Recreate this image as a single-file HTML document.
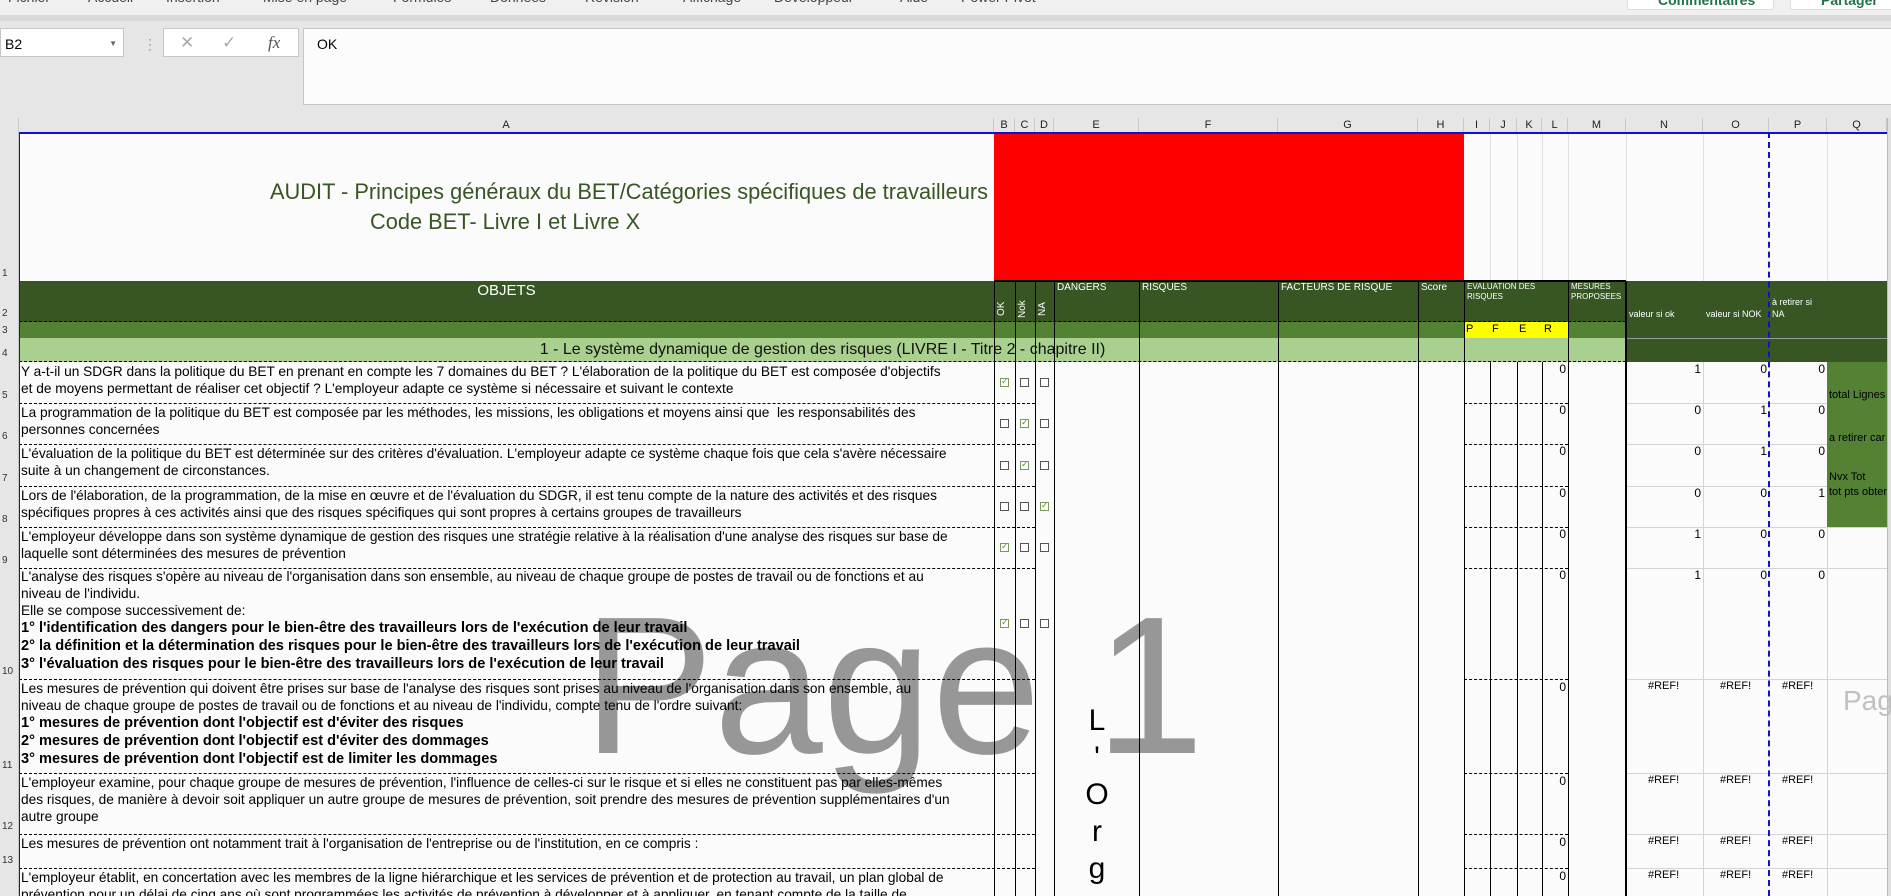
<!DOCTYPE html>
<html><head><meta charset="utf-8"><style>
*{margin:0;padding:0;box-sizing:border-box}
html{width:1891px;height:896px;overflow:hidden}
body{width:1891px;height:896px;overflow:hidden;background:#e6e6e6;font-family:"Liberation Sans",Arial,sans-serif;position:relative}
.a{position:absolute}
.t{position:absolute;white-space:nowrap;font-size:13.7px;line-height:17px;color:#000}
.t b{font-size:14.6px}
.cb{position:absolute;width:9px;height:9px;border:1px solid #555;background:#fff}
.cb.k{border-color:#7a9a5a}
.cb.k::after{content:"✓";position:absolute;left:0;top:-3px;font-size:9px;color:#5a8a3a}
.hd{position:absolute;top:118px;height:14px;font-size:11px;text-align:center;line-height:14px;color:#222;border-right:1px solid #c8c8c8}
.v{position:absolute;width:1px;background:#000}
.hl{position:absolute;height:0;border-top:1px dashed #000}
.gl{position:absolute;height:1px;background:#d4d4d4}
.n{position:absolute;font-size:12px;text-align:right;color:#000}
.rn{position:absolute;left:0;width:18px;font-size:10px;color:#333;text-align:left;padding-left:2px}
.mn{position:absolute;top:-11px;font-size:14px;color:#444}
</style></head><body>
<div class="a" style="left:0;top:0;width:1891px;height:15px;background:#f0f0f0"></div>
<div class="a" style="left:0;top:15px;width:1891px;height:6px;background:#d9d9d9"></div>
<span class="mn" style="left:8px">Fichier</span><span class="mn" style="left:88px">Accueil</span><span class="mn" style="left:166px">Insertion</span><span class="mn" style="left:263px">Mise en page</span><span class="mn" style="left:393px">Formules</span><span class="mn" style="left:490px">Données</span><span class="mn" style="left:585px">Révision</span><span class="mn" style="left:683px">Affichage</span><span class="mn" style="left:774px">Développeur</span><span class="mn" style="left:900px">Aide</span><span class="mn" style="left:961px">Power Pivot</span>
<div class="a" style="left:1627px;top:-6px;width:147px;height:16px;background:#fff;border:1px solid #ddd;border-radius:3px;font-size:14px;font-weight:bold;color:#217346;padding-left:30px;line-height:10px;overflow:hidden">Commentaires</div>
<div class="a" style="left:1790px;top:-6px;width:110px;height:16px;background:#fff;border:1px solid #ddd;border-radius:3px;font-size:14px;font-weight:bold;color:#217346;padding-left:30px;line-height:10px;overflow:hidden">Partager</div>
<div class="a" style="left:0;top:28px;width:124px;height:29px;background:#fff;border:1px solid #c6c6c6;font-size:14px;padding:8px 4px;line-height:14px">B2<span style="position:absolute;right:6px;top:8px;font-size:8px;color:#666">▼</span></div>
<div class="a" style="left:143px;top:36px;font-size:14px;color:#999">⋮</div>
<div class="a" style="left:163px;top:28px;width:136px;height:29px;background:#fff;border:1px solid #c6c6c6;font-size:17px;color:#aaa;line-height:27px"><span style="position:absolute;left:16px">✕</span><span style="position:absolute;left:58px">✓</span><span style="position:absolute;left:104px;font-family:'Liberation Serif',serif;font-style:italic;color:#555">fx</span></div>
<div class="a" style="left:303px;top:28px;width:1588px;height:77px;background:#fcfcfc;border:1px solid #c6c6c6;border-right:none;font-size:14px;padding:8px 13px;line-height:14px">OK</div>
<div class="a" style="left:19px;top:132px;width:1868px;height:764px;background:#fbfbfb"></div>
<div class="a" style="left:1887px;top:118px;width:4px;height:778px;background:#e0e0e0;border-left:1px solid #bbb"></div>
<div class="a" style="left:0;top:118px;width:19px;height:14px;border-right:1px solid #c8c8c8"></div>
<div class="hd" style="left:19px;width:975px">A</div>
<div class="hd" style="left:994px;width:21px">B</div>
<div class="hd" style="left:1015px;width:20px">C</div>
<div class="hd" style="left:1035px;width:19px">D</div>
<div class="hd" style="left:1054px;width:85px">E</div>
<div class="hd" style="left:1139px;width:139px">F</div>
<div class="hd" style="left:1278px;width:140px">G</div>
<div class="hd" style="left:1418px;width:46px">H</div>
<div class="hd" style="left:1464px;width:26px">I</div>
<div class="hd" style="left:1490px;width:27px">J</div>
<div class="hd" style="left:1517px;width:25px">K</div>
<div class="hd" style="left:1542px;width:26px">L</div>
<div class="hd" style="left:1568px;width:58px">M</div>
<div class="hd" style="left:1626px;width:77px">N</div>
<div class="hd" style="left:1703px;width:66px">O</div>
<div class="hd" style="left:1769px;width:58px">P</div>
<div class="hd" style="left:1827px;width:60px">Q</div>
<div class="rn" style="top:268px">1</div><div class="rn" style="top:308px">2</div><div class="rn" style="top:325px">3</div><div class="rn" style="top:348px">4</div><div class="rn" style="top:390px">5</div><div class="rn" style="top:431px">6</div><div class="rn" style="top:473px">7</div><div class="rn" style="top:514px">8</div><div class="rn" style="top:555px">9</div><div class="rn" style="top:666px">10</div><div class="rn" style="top:760px">11</div><div class="rn" style="top:821px">12</div><div class="rn" style="top:855px">13</div>
<div class="a" style="left:0;top:132px;width:19px;height:764px;border-right:1px solid #c8c8c8"></div>
<div class="a" style="left:1490px;top:132px;width:1px;height:149px;background:#e0e0e0"></div>
<div class="a" style="left:1517px;top:132px;width:1px;height:149px;background:#e0e0e0"></div>
<div class="a" style="left:1542px;top:132px;width:1px;height:149px;background:#e0e0e0"></div>
<div class="a" style="left:1568px;top:132px;width:1px;height:149px;background:#e0e0e0"></div>
<div class="a" style="left:1626px;top:132px;width:1px;height:149px;background:#e0e0e0"></div>
<div class="a" style="left:1703px;top:132px;width:1px;height:149px;background:#e0e0e0"></div>
<div class="a" style="left:1827px;top:132px;width:1px;height:149px;background:#e0e0e0"></div>
<div class="a" style="left:994px;top:132px;width:470px;height:149px;background:#ff0000"></div>
<div class="a" style="left:270px;top:179px;font-size:21.8px;color:#375623;white-space:nowrap">AUDIT - Principes généraux du BET/Catégories spécifiques de travailleurs</div>
<div class="a" style="left:370px;top:209px;font-size:21.8px;color:#375623;white-space:nowrap">Code BET- Livre I et Livre X</div>
<div class="a" style="left:19px;top:281px;width:1868px;height:41px;background:#375623"></div>
<div class="a" style="left:19px;top:322px;width:1607px;height:16px;background:#548235"></div>
<div class="a" style="left:1626px;top:322px;width:261px;height:40px;background:#375623"></div>
<div class="a" style="left:1626px;top:338px;width:261px;height:1px;background:#999"></div>
<div class="a" style="left:1464px;top:322px;width:104px;height:16px;background:#ffff00"></div>
<div class="a" style="left:994px;top:280px;width:632px;height:2px;background:#000"></div>
<div class="hl" style="left:19px;top:321px;width:1607px"></div>
<div class="a" style="left:19px;top:282px;width:975px;text-align:center;color:#fff;font-size:15px">OBJETS</div>
<div class="a" style="left:996px;top:316px;color:#fff;font-size:10px;transform:rotate(-90deg);transform-origin:left top">OK</div>
<div class="a" style="left:1017px;top:318px;color:#fff;font-size:10px;transform:rotate(-90deg);transform-origin:left top">Nok</div>
<div class="a" style="left:1037px;top:316px;color:#fff;font-size:10px;transform:rotate(-90deg);transform-origin:left top">NA</div>
<div class="a" style="left:1057px;top:282px;color:#fff;font-size:10px">DANGERS</div>
<div class="a" style="left:1142px;top:282px;color:#fff;font-size:10px">RISQUES</div>
<div class="a" style="left:1281px;top:282px;color:#fff;font-size:10px">FACTEURS DE RISQUE</div>
<div class="a" style="left:1421px;top:282px;color:#fff;font-size:10px">Score</div>
<div class="a" style="left:1467px;top:282px;color:#fff;font-size:8px;line-height:10px">EVALUATION DES<br>RISQUES</div>
<div class="a" style="left:1571px;top:282px;color:#fff;font-size:8px;line-height:10px">MESURES<br>PROPOSEES</div>
<div class="a" style="left:1629px;top:309px;color:#fff;font-size:9px">valeur si ok</div>
<div class="a" style="left:1706px;top:309px;color:#fff;font-size:9px">valeur si NOK</div>
<div class="a" style="left:1772px;top:296px;color:#fff;font-size:9px;line-height:12px">à retirer si<br>NA</div>
<div class="a" style="left:1466px;top:323px;font-size:11px">P</div><div class="a" style="left:1492px;top:323px;font-size:11px">F</div><div class="a" style="left:1519px;top:323px;font-size:11px">E</div><div class="a" style="left:1544px;top:323px;font-size:11px">R</div>
<div class="a" style="left:19px;top:338px;width:1607px;height:24px;background:#a9d08e;text-align:center;font-size:16px;line-height:24px;color:#111">1 - Le système dynamique de gestion des risques (LIVRE I - Titre 2 - chapitre II)</div>
<div class="hl" style="left:19px;top:361px;width:1607px"></div>
<div class="a" style="left:1827px;top:362px;width:60px;height:165px;background:#548235;overflow:hidden;font-size:11px;line-height:13px;white-space:nowrap">
<div class="a" style="left:2px;top:27px">total Lignes</div><div class="a" style="left:2px;top:70px">a retirer car</div><div class="a" style="left:2px;top:109px">Nvx Tot</div><div class="a" style="left:2px;top:124px">tot pts obtenus</div></div>
<div class="a" style="left:583px;top:588px;font-size:196px;line-height:196px;color:#979797;white-space:nowrap">Page 1</div>
<div class="a" style="left:1843px;top:685px;font-size:28px;color:#c0c0c0;white-space:nowrap">Pag</div>
<div class="a" style="left:1084px;top:702px;width:26px;text-align:center;font-size:30px;line-height:37px;color:#000">L<br>'<br>O<br>r<br>g</div>
<div class="v" style="left:994px;top:281px;height:615px"></div>
<div class="v" style="left:1015px;top:281px;height:615px"></div>
<div class="v" style="left:1035px;top:281px;height:615px"></div>
<div class="v" style="left:1054px;top:281px;height:615px"></div>
<div class="v" style="left:1139px;top:281px;height:615px"></div>
<div class="v" style="left:1278px;top:281px;height:615px"></div>
<div class="v" style="left:1418px;top:281px;height:615px"></div>
<div class="v" style="left:1464px;top:281px;height:615px"></div>
<div class="v" style="left:1490px;top:362px;height:534px"></div>
<div class="v" style="left:1517px;top:362px;height:534px"></div>
<div class="v" style="left:1542px;top:362px;height:534px"></div>
<div class="v" style="left:1568px;top:281px;height:615px"></div>
<div class="v" style="left:1625px;top:281px;height:615px;width:2px"></div>
<div class="a" style="left:1703px;top:362px;width:1px;height:534px;background:#d4d4d4"></div>
<div class="a" style="left:1827px;top:527px;width:1px;height:369px;background:#d4d4d4"></div>
<div class="hl" style="left:19px;top:403px;width:1016px"></div><div class="hl" style="left:1464px;top:403px;width:104px"></div><div class="gl" style="left:1627px;top:403px;width:200px"></div>
<div class="hl" style="left:19px;top:444px;width:1016px"></div><div class="hl" style="left:1464px;top:444px;width:104px"></div><div class="gl" style="left:1627px;top:444px;width:200px"></div>
<div class="hl" style="left:19px;top:486px;width:1016px"></div><div class="hl" style="left:1464px;top:486px;width:104px"></div><div class="gl" style="left:1627px;top:486px;width:200px"></div>
<div class="hl" style="left:19px;top:527px;width:1016px"></div><div class="hl" style="left:1464px;top:527px;width:104px"></div><div class="gl" style="left:1627px;top:527px;width:260px"></div>
<div class="hl" style="left:19px;top:568px;width:1016px"></div><div class="hl" style="left:1464px;top:568px;width:104px"></div><div class="gl" style="left:1627px;top:568px;width:260px"></div>
<div class="hl" style="left:19px;top:679px;width:1016px"></div><div class="hl" style="left:1464px;top:679px;width:104px"></div><div class="gl" style="left:1627px;top:679px;width:260px"></div>
<div class="hl" style="left:19px;top:773px;width:1016px"></div><div class="hl" style="left:1464px;top:773px;width:104px"></div><div class="gl" style="left:1627px;top:773px;width:260px"></div>
<div class="hl" style="left:19px;top:834px;width:1016px"></div><div class="hl" style="left:1464px;top:834px;width:104px"></div><div class="gl" style="left:1627px;top:834px;width:260px"></div>
<div class="hl" style="left:19px;top:868px;width:1016px"></div><div class="hl" style="left:1464px;top:868px;width:104px"></div><div class="gl" style="left:1627px;top:868px;width:260px"></div>
<div class="a" style="left:19px;top:132px;width:1868px;height:2px;background:#1010d0"></div>
<div class="a" style="left:19px;top:132px;width:1px;height:764px;background:#1010d0"></div>
<div class="a" style="left:1768px;top:132px;width:0;height:764px;border-left:2px dashed #1010d0"></div>
<div class="t" style="left:21px;top:363px">Y a-t-il un SDGR dans la politique du BET en prenant en compte les 7 domaines du BET ? L'élaboration de la politique du BET est composée d'objectifs<br>et de moyens permettant de réaliser cet objectif ? L'employeur adapte ce système si nécessaire et suivant le contexte</div>
<div class="t" style="left:21px;top:404px">La programmation de la politique du BET est composée par les méthodes, les missions, les obligations et moyens ainsi que&nbsp; les responsabilités des<br>personnes concernées</div>
<div class="t" style="left:21px;top:445px">L'évaluation de la politique du BET est déterminée sur des critères d'évaluation. L'employeur adapte ce système chaque fois que cela s'avère nécessaire<br>suite à un changement de circonstances.</div>
<div class="t" style="left:21px;top:487px">Lors de l'élaboration, de la programmation, de la mise en œuvre et de l'évaluation du SDGR, il est tenu compte de la nature des activités et des risques<br>spécifiques propres à ces activités ainsi que des risques spécifiques qui sont propres à certains groupes de travailleurs</div>
<div class="t" style="left:21px;top:528px">L'employeur développe dans son système dynamique de gestion des risques une stratégie relative à la réalisation d'une analyse des risques sur base de<br>laquelle sont déterminées des mesures de prévention</div>
<div class="t" style="left:21px;top:568px">L'analyse des risques s'opère au niveau de l'organisation dans son ensemble, au niveau de chaque groupe de postes de travail ou de fonctions et au<br>niveau de l'individu.<br>Elle se compose successivement de:<br><b>1° l'identification des dangers pour le bien-être des travailleurs lors de l'exécution de leur travail<br>2° la définition et la détermination des risques pour le bien-être des travailleurs lors de l'exécution de leur travail<br>3° l'évaluation des risques pour le bien-être des travailleurs lors de l'exécution de leur travail</b></div>
<div class="t" style="left:21px;top:680px">Les mesures de prévention qui doivent être prises sur base de l'analyse des risques sont prises au niveau de l'organisation dans son ensemble, au<br>niveau de chaque groupe de postes de travail ou de fonctions et au niveau de l'individu, compte tenu de l'ordre suivant:<br><b>1° mesures de prévention dont l'objectif est d'éviter des risques<br>2° mesures de prévention dont l'objectif est d'éviter des dommages<br>3° mesures de prévention dont l'objectif est de limiter les dommages</b></div>
<div class="t" style="left:21px;top:774px">L'employeur examine, pour chaque groupe de mesures de prévention, l'influence de celles-ci sur le risque et si elles ne constituent pas par elles-mêmes<br>des risques, de manière à devoir soit appliquer un autre groupe de mesures de prévention, soit prendre des mesures de prévention supplémentaires d'un<br>autre groupe</div>
<div class="t" style="left:21px;top:835px">Les mesures de prévention ont notamment trait à l'organisation de l'entreprise ou de l'institution, en ce compris :</div>
<div class="t" style="left:21px;top:869px">L'employeur établit, en concertation avec les membres de la ligne hiérarchique et les services de prévention et de protection au travail, un plan global de<br>prévention pour un délai de cinq ans où sont programmées les activités de prévention à développer et à appliquer, en tenant compte de la taille de</div>
<div class="cb k" style="left:1000px;top:378px"></div><div class="cb" style="left:1020px;top:378px"></div><div class="cb" style="left:1040px;top:378px"></div>
<div class="cb" style="left:1000px;top:419px"></div><div class="cb k" style="left:1020px;top:419px"></div><div class="cb" style="left:1040px;top:419px"></div>
<div class="cb" style="left:1000px;top:461px"></div><div class="cb k" style="left:1020px;top:461px"></div><div class="cb" style="left:1040px;top:461px"></div>
<div class="cb" style="left:1000px;top:502px"></div><div class="cb" style="left:1020px;top:502px"></div><div class="cb k" style="left:1040px;top:502px"></div>
<div class="cb k" style="left:1000px;top:543px"></div><div class="cb" style="left:1020px;top:543px"></div><div class="cb" style="left:1040px;top:543px"></div>
<div class="cb k" style="left:1000px;top:619px"></div><div class="cb" style="left:1020px;top:619px"></div><div class="cb" style="left:1040px;top:619px"></div>
<div class="n" style="left:1542px;width:24px;top:362px">0</div>
<div class="n" style="left:1542px;width:24px;top:403px">0</div>
<div class="n" style="left:1542px;width:24px;top:444px">0</div>
<div class="n" style="left:1542px;width:24px;top:486px">0</div>
<div class="n" style="left:1542px;width:24px;top:527px">0</div>
<div class="n" style="left:1542px;width:24px;top:568px">0</div>
<div class="n" style="left:1542px;width:24px;top:680px">0</div>
<div class="n" style="left:1542px;width:24px;top:774px">0</div>
<div class="n" style="left:1542px;width:24px;top:835px">0</div>
<div class="n" style="left:1542px;width:24px;top:869px">0</div>
<div class="n" style="left:1626px;width:75px;top:362px">1</div><div class="n" style="left:1703px;width:64px;top:362px">0</div><div class="n" style="left:1769px;width:56px;top:362px">0</div>
<div class="n" style="left:1626px;width:75px;top:403px">0</div><div class="n" style="left:1703px;width:64px;top:403px">1</div><div class="n" style="left:1769px;width:56px;top:403px">0</div>
<div class="n" style="left:1626px;width:75px;top:444px">0</div><div class="n" style="left:1703px;width:64px;top:444px">1</div><div class="n" style="left:1769px;width:56px;top:444px">0</div>
<div class="n" style="left:1626px;width:75px;top:486px">0</div><div class="n" style="left:1703px;width:64px;top:486px">0</div><div class="n" style="left:1769px;width:56px;top:486px">1</div>
<div class="n" style="left:1626px;width:75px;top:527px">1</div><div class="n" style="left:1703px;width:64px;top:527px">0</div><div class="n" style="left:1769px;width:56px;top:527px">0</div>
<div class="n" style="left:1626px;width:75px;top:568px">1</div><div class="n" style="left:1703px;width:64px;top:568px">0</div><div class="n" style="left:1769px;width:56px;top:568px">0</div>
<div class="n" style="left:1648px;top:680px;font-size:11px">#REF!</div><div class="n" style="left:1720px;top:680px;font-size:11px">#REF!</div><div class="n" style="left:1782px;top:680px;font-size:11px">#REF!</div>
<div class="n" style="left:1648px;top:774px;font-size:11px">#REF!</div><div class="n" style="left:1720px;top:774px;font-size:11px">#REF!</div><div class="n" style="left:1782px;top:774px;font-size:11px">#REF!</div>
<div class="n" style="left:1648px;top:835px;font-size:11px">#REF!</div><div class="n" style="left:1720px;top:835px;font-size:11px">#REF!</div><div class="n" style="left:1782px;top:835px;font-size:11px">#REF!</div>
<div class="n" style="left:1648px;top:869px;font-size:11px">#REF!</div><div class="n" style="left:1720px;top:869px;font-size:11px">#REF!</div><div class="n" style="left:1782px;top:869px;font-size:11px">#REF!</div>
</body></html>
